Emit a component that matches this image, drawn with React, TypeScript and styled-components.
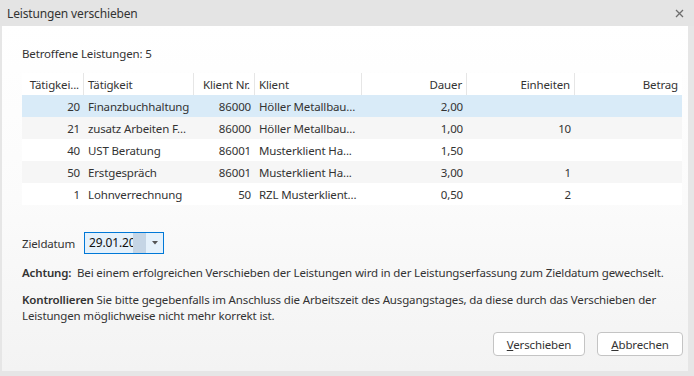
import styled, { createGlobalStyle } from 'styled-components';

const GlobalStyle = createGlobalStyle`
    html, body {
        margin: 0;
        padding: 0;
        width: 694px;
        height: 376px;
        overflow: hidden;
    }
    body {
        font-family: "Segoe UI", "Noto Sans", sans-serif;
        font-size: 11.5px;
        letter-spacing: -0.15px;
        color: #333;
    }
`;

type Align = 'left' | 'right';

interface Column {
    title: string;
    width: number;
    align: Align;
}

const columns: Column[] = [
    { title: 'Tätigkei...', width: 62, align: 'right' },
    { title: 'Tätigkeit', width: 110, align: 'left' },
    { title: 'Klient Nr.', width: 61, align: 'right' },
    { title: 'Klient', width: 107, align: 'left' },
    { title: 'Dauer', width: 105, align: 'right' },
    { title: 'Einheiten', width: 108, align: 'right' },
    { title: 'Betrag', width: 107, align: 'right' },
];

const rows: string[][] = [
    ['20', 'Finanzbuchhaltung', '86000', 'Höller Metallbau...', '2,00', '', ''],
    ['21', 'zusatz Arbeiten F...', '86000', 'Höller Metallbau...', '1,00', '10', ''],
    ['40', 'UST Beratung', '86001', 'Musterklient Ha...', '1,50', '', ''],
    ['50', 'Erstgespräch', '86001', 'Musterklient Ha...', '3,00', '1', ''],
    ['1', 'Lohnverrechnung', '50', 'RZL Musterklient...', '0,50', '2', ''],
];

const gridColumns = columns.map((c) => `${c.width}px`).join(' ');

function App() {
    return (
        <>
            <GlobalStyle />
            <Window>
                <TitleBar>
                    <Title>Leistungen verschieben</Title>
                    <CloseButton>
                        <svg width="9" height="9" viewBox="0 0 9 9">
                            <path d="M1 1 L8 8 M8 1 L1 8" stroke="#6e6e6e" strokeWidth="1.3" />
                        </svg>
                    </CloseButton>
                </TitleBar>
                <Body>
                    <Count>Betroffene Leistungen: 5</Count>
                    <Grid>
                        {columns.map((col, i) => (
                            <HeaderCell key={col.title} align={col.align} last={i === columns.length - 1}>
                                {col.title}
                            </HeaderCell>
                        ))}
                        {rows.map((row, r) =>
                            row.map((value, c) => (
                                <Cell
                                    key={`${r}-${c}`}
                                    align={columns[c].align}
                                    selected={r === 0}
                                    alternate={r % 2 === 1}
                                >
                                    {value}
                                </Cell>
                            ))
                        )}
                    </Grid>

                    <DateRow>
                        <Label>Zieldatum</Label>
                        <DatePicker>
                            <DateText>29.01.2025</DateText>
                            <Selection />
                            <DropButton>
                                <svg width="6" height="4" viewBox="0 0 6 4">
                                    <path d="M0 0 L6 0 L3 3.5 Z" fill="#555" />
                                </svg>
                            </DropButton>
                        </DatePicker>
                    </DateRow>

                    <Note>
                        <Strong>Achtung:</Strong>&nbsp; Bei einem erfolgreichen Verschieben der Leistungen wird in der Leistungserfassung zum Zieldatum gewechselt.
                    </Note>
                    <Note>
                        <Strong>Kontrollieren</Strong> Sie bitte gegebenfalls im Anschluss die Arbeitszeit des Ausgangstages, da diese durch das Verschieben der Leistungen möglichweise nicht mehr korrekt ist.
                    </Note>

                    <Footer>
                        <Button width={92}><u>V</u>erschieben</Button>
                        <Button width={86}><u>A</u>bbrechen</Button>
                    </Footer>
                </Body>
            </Window>
        </>
    );
}

const Window = styled.div`
    width: 694px;
    height: 376px;
    display: flex;
    flex-direction: column;
    background: #e6e6e6;
    padding: 0 6px 5px 2px;
    box-sizing: border-box;
`;

const TitleBar = styled.div`
    height: 26px;
    margin: 0 -6px 0 -2px;
    padding: 0 8px 0 7px;
    display: flex;
    align-items: center;
    justify-content: space-between;
    background: #e4e4e4;
    flex-shrink: 0;
`;

const Title = styled.div`
    font-size: 12px;
    color: #333;
`;

const CloseButton = styled.div`
    display: flex;
    align-items: center;
    justify-content: center;
    width: 14px;
    height: 14px;
`;

const Body = styled.div`
    flex: 1;
    display: flex;
    flex-direction: column;
    padding: 19px 5px 0 20px;
    background: linear-gradient(#ffffff 0%, #fbfbfb 50%, #f3f3f3 100%);
`;

const Count = styled.div`
    height: 18px;
    line-height: 18px;
    margin-bottom: 10px;
`;

const Grid = styled.div`
    display: grid;
    grid-template-columns: ${gridColumns};
    grid-auto-rows: 22px;
    background: #fff;
    width: 660px;
`;

const HeaderCell = styled.div<{ align: Align; last: boolean }>`
    display: flex;
    align-items: center;
    justify-content: ${({ align }) => (align === 'right' ? 'flex-end' : 'flex-start')};
    padding: 0 4px 0 4px;
    white-space: nowrap;
    overflow: hidden;
    border-right: ${({ last }) => (last ? 'none' : '1px solid #e6e6e6')};
    background: #fff;
`;

const Cell = styled.div<{ align: Align; selected: boolean; alternate: boolean }>`
    display: flex;
    align-items: center;
    justify-content: ${({ align }) => (align === 'right' ? 'flex-end' : 'flex-start')};
    padding: 0 4px;
    white-space: nowrap;
    overflow: hidden;
    background: ${({ selected, alternate }) => (selected ? '#d9ebf8' : alternate ? '#f6f6f6' : '#fff')};
`;

const DateRow = styled.div`
    display: flex;
    align-items: center;
    margin-top: 27px;
    height: 22px;
`;

const Label = styled.div`
    width: 62px;
`;

const DatePicker = styled.div`
    display: flex;
    align-items: stretch;
    width: 78px;
    height: 20px;
    border: 1px solid #0078d7;
    background: #e5f1fb;
`;

const DateText = styled.div`
    width: 48px;
    padding-left: 4px;
    box-sizing: border-box;
    overflow: hidden;
    white-space: nowrap;
    line-height: 20px;
    font-size: 12px;
    color: #111;
`;

const Selection = styled.div`
    width: 13px;
    background: #c5d5e5;
`;

const DropButton = styled.div`
    flex: 1;
    display: flex;
    align-items: center;
    justify-content: center;
`;

const Note = styled.div`
    margin-top: 11px;
    line-height: 16px;
    padding-right: 8px;
`;

const Strong = styled.span`
    font-weight: 600;
`;

const Footer = styled.div`
    margin-top: auto;
    margin-bottom: 15px;
    display: flex;
    justify-content: flex-end;
    gap: 12px;
`;

const Button = styled.button<{ width: number }>`
    width: ${({ width }) => width}px;
    height: 24px;
    font-family: inherit;
    font-size: 11.5px;
    letter-spacing: inherit;
    color: #333;
    background: #fff;
    border: 1px solid #c4c4c4;
    border-radius: 4px;
    padding: 0;
`;

export default App;
